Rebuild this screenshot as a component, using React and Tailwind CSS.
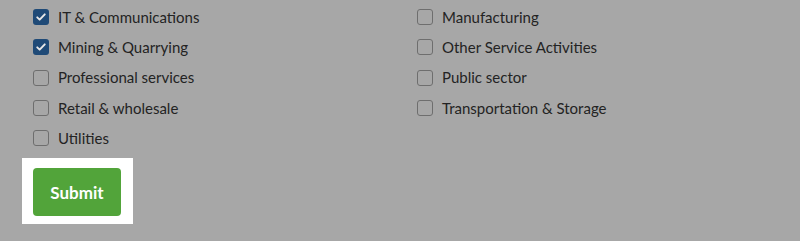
import { useState } from "react"

const left = [
  { label: "IT & Communications", checked: true },
  { label: "Mining & Quarrying", checked: true },
  { label: "Professional services", checked: false },
  { label: "Retail & wholesale", checked: false },
  { label: "Utilities", checked: false },
]

const right = [
  { label: "Manufacturing", checked: false },
  { label: "Other Service Activities", checked: false },
  { label: "Public sector", checked: false },
  { label: "Transportation & Storage", checked: false },
]

function Check({ label, checked }) {
  return (
    <label className="flex h-[30.25px] items-center gap-[9px]">
      {checked ? (
        <span className="flex h-[16px] w-[16px] items-center justify-center rounded-[3px] bg-[#1f4a77]">
          <svg viewBox="0 0 16 16" className="h-[12px] w-[12px]">
            <path d="M3 8.5l3.2 3L13 4.5" fill="none" stroke="#e8e8e8" strokeWidth="2.6" strokeLinecap="round" strokeLinejoin="round" />
          </svg>
        </span>
      ) : (
        <span className="h-[16px] w-[16px] rounded-[3px] border border-[#6e6e6e]" />
      )}
      <span className="text-[15px] text-[#232323]">{label}</span>
    </label>
  )
}

export default function App() {
  const [sent, setSent] = useState(false)

  return (
    <div className="h-[241px] w-[800px] bg-[#a7a7a7] pl-[33px] pt-[2px] font-['Lato',sans-serif]">
      <div className="grid grid-cols-[384px_1fr]">
        <div className="flex flex-col">
          {left.map((item) => (
            <Check key={item.label} {...item} />
          ))}
        </div>
        <div className="flex flex-col">
          {right.map((item) => (
            <Check key={item.label} {...item} />
          ))}
        </div>
      </div>
      <div className="-ml-[11px] mt-[5px] w-[111px] bg-white pb-[8px] pl-[11px] pt-[10px]">
        <button
          onClick={() => setSent(true)}
          className="h-[48px] w-[88px] rounded-[4px] bg-[#52a43a] text-[17px] font-bold text-white"
        >
          Submit
        </button>
      </div>
    </div>
  )
}
